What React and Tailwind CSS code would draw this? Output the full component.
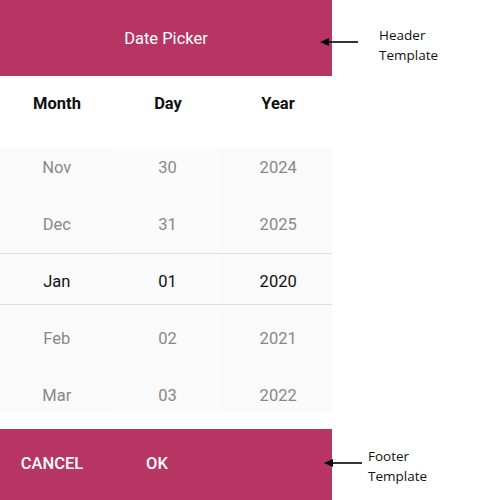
import React from 'react';

const columns = [
  ['Nov', 'Dec', 'Jan', 'Feb', 'Mar'],
  ['30', '31', '01', '02', '03'],
  ['2024', '2025', '2020', '2021', '2022'],
];

function Arrow() {
  return (
    <svg width="40" height="10" viewBox="0 0 40 10">
      <line x1="6" y1="5" x2="38" y2="5" stroke="#000" strokeWidth="1.6" />
      <polygon points="0,5 9,1 9,9" fill="#000" />
    </svg>
  );
}

export default function App() {
  return (
    <div className="flex h-[500px] w-[493px] bg-white font-['Roboto',sans-serif]">
      {/* Picker */}
      <div className="flex w-[332px] flex-col">
        <div className="flex h-[76px] items-center justify-center pt-[2px] bg-[#b73562] text-[16.5px] text-white">
          Date Picker
        </div>

        <div className="grid h-[54px] grid-cols-3 pt-[2px] pl-[2px] text-[16.5px] font-bold text-[#111]">
          <div className="flex items-center justify-center">Month</div>
          <div className="flex items-center justify-center pl-[2px]">Day</div>
          <div className="flex items-center justify-center pl-[2px]">Year</div>
        </div>

        <div className="relative mt-[18px] h-[265px] overflow-hidden">
          <div className="-mt-[8px] grid grid-cols-3">
            {columns.map((col, ci) => (
              <div key={ci} className={`flex flex-col pl-[3px] ${ci === 1 ? 'bg-[#fbfbfb]' : 'bg-[#fafafa]'}`}>
                {col.map((v, ri) => (
                  <div
                    key={v}
                    className={`flex h-[57px] items-center justify-center text-[16.5px] ${
                      ri === 2 ? 'text-[#111]' : 'text-[#888]'
                    }`}
                  >
                    {v}
                  </div>
                ))}
              </div>
            ))}
          </div>
          {/* selection band */}
          <div className="pointer-events-none absolute left-0 right-0 top-[105px] h-[52px] border-y border-[#dedede]" />
        </div>

        <div className="mt-auto flex h-[71px] items-center bg-[#b73562] text-[16.5px] font-medium text-white">
          <div className="flex w-[104px] justify-center">CANCEL</div>
          <div className="flex w-[106px] justify-center">OK</div>
        </div>
      </div>

      {/* Annotations */}
      <div className="flex flex-1 flex-col font-['Open_Sans',sans-serif] text-[13.5px] leading-[20px] text-[#111]">
        <div className="mt-[25px] flex items-start">
          <div className="ml-[-12px] mt-[12px]">
            <Arrow />
          </div>
          <div className="ml-[19px]">
            Header
            <br />
            Template
          </div>
        </div>
        <div className="mt-auto mb-[14px] flex items-start">
          <div className="ml-[-8px] mt-[12px]">
            <Arrow />
          </div>
          <div className="ml-[4px]">
            Footer
            <br />
            Template
          </div>
        </div>
      </div>
    </div>
  );
}
